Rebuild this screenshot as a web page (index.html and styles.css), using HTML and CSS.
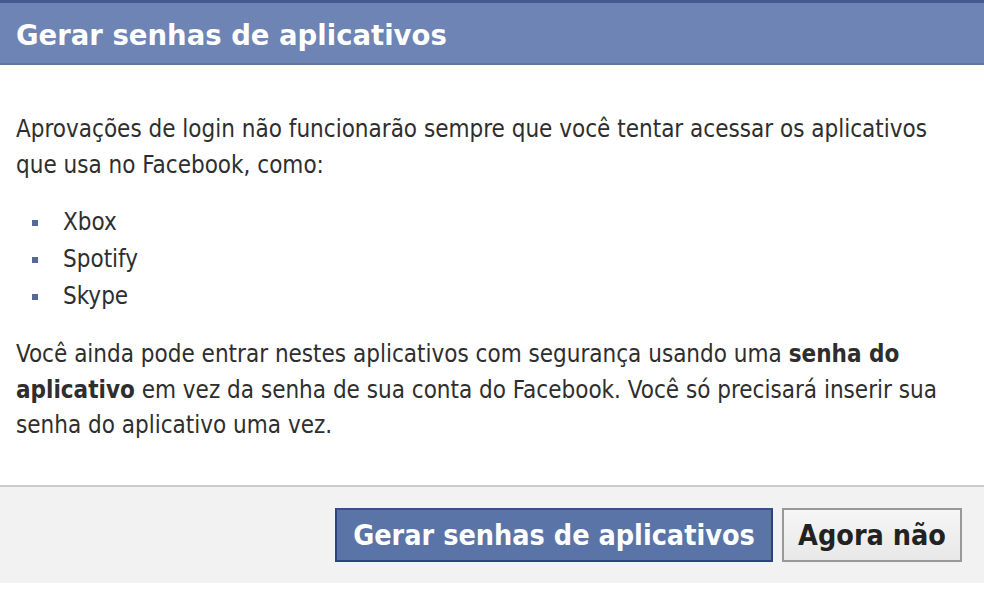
FILE: index.html
```html
<!DOCTYPE html>
<html lang="pt-BR">
<head>
<meta charset="utf-8">
<title>Gerar senhas de aplicativos</title>
<link rel="stylesheet" href="styles.css">
</head>
<body>
<div class="dialog">
  <div class="header">
    <h1 class="title">Gerar senhas de aplicativos</h1>
  </div>
  <div class="content">
    <p class="para first">Aprovações de login não funcionarão sempre que você tentar acessar os aplicativos que usa no Facebook, como:</p>
    <ul class="apps">
      <li class="app">Xbox</li>
      <li class="app">Spotify</li>
      <li class="app">Skype</li>
    </ul>
    <p class="para">Você ainda pode entrar nestes aplicativos com segurança usando uma <b>senha do aplicativo</b> em vez da senha de sua conta do Facebook. Você só precisará inserir sua senha do aplicativo uma vez.</p>
  </div>
  <div class="footer">
    <button class="btn primary">Gerar senhas de aplicativos</button>
    <button class="btn secondary">Agora não</button>
  </div>
</div>
</body>
</html>
```
FILE: styles.css
```css
html, body {
  margin: 0;
  padding: 0;
  background: #ffffff;
}
body {
  width: 984px;
  height: 595px;
  overflow: hidden;
  font-family: "DejaVu Sans Condensed", "DejaVu Sans", sans-serif;
  font-stretch: condensed;
  color: #2e2e2e;
}
.dialog {
  display: flex;
  flex-direction: column;
  width: 984px;
}
.header {
  height: 60px;
  box-sizing: border-box;
  background: #6d84b4;
  border-top: 3px solid #44598f;
  border-bottom: 2px solid #62739e;
  display: flex;
  align-items: center;
  padding-left: 16px;
  padding-top: 4px;
  height: 65px;
}
.title {
  margin: 0;
  font-family: "DejaVu Sans", sans-serif;
  font-stretch: normal;
  font-weight: bold;
  font-size: 27.5px;
  color: #ffffff;
}
.content {
  height: 420px;
  width: 930px;
  padding: 0 16px;
  font-size: 24px;
  line-height: 35.5px;
}
.para {
  margin: 0;
}
.para.first {
  margin-top: 47px;
}
.apps {
  list-style: none;
  margin: 21px 0 22px 0;
  padding: 0;
}
.app {
  display: flex;
  align-items: center;
  gap: 25px;
  padding-left: 16px;
  line-height: 37px;
}
.app::before {
  content: "";
  width: 6px;
  height: 6px;
  background: #56679a;
}
.footer {
  height: 96px;
  background: #f2f2f2;
  border-top: 2px solid #cccccc;
  display: flex;
  justify-content: flex-end;
  align-items: center;
  gap: 9px;
  padding-right: 22px;
}
.btn {
  height: 54px;
  font-family: "DejaVu Sans Condensed", "DejaVu Sans", sans-serif;
  font-stretch: condensed;
  font-weight: bold;
  font-size: 28.5px;
  padding: 0;
  margin: 0;
  cursor: pointer;
}
.primary {
  width: 438px;
  background: #5b74a8;
  color: #ffffff;
  border: 2px solid #29447e;
  border-top-color: #3b5080;
}
.secondary {
  width: 180px;
  background: linear-gradient(#f6f6f6, #e8e8e8);
  color: #222222;
  border: 2px solid #999999;
}
```
